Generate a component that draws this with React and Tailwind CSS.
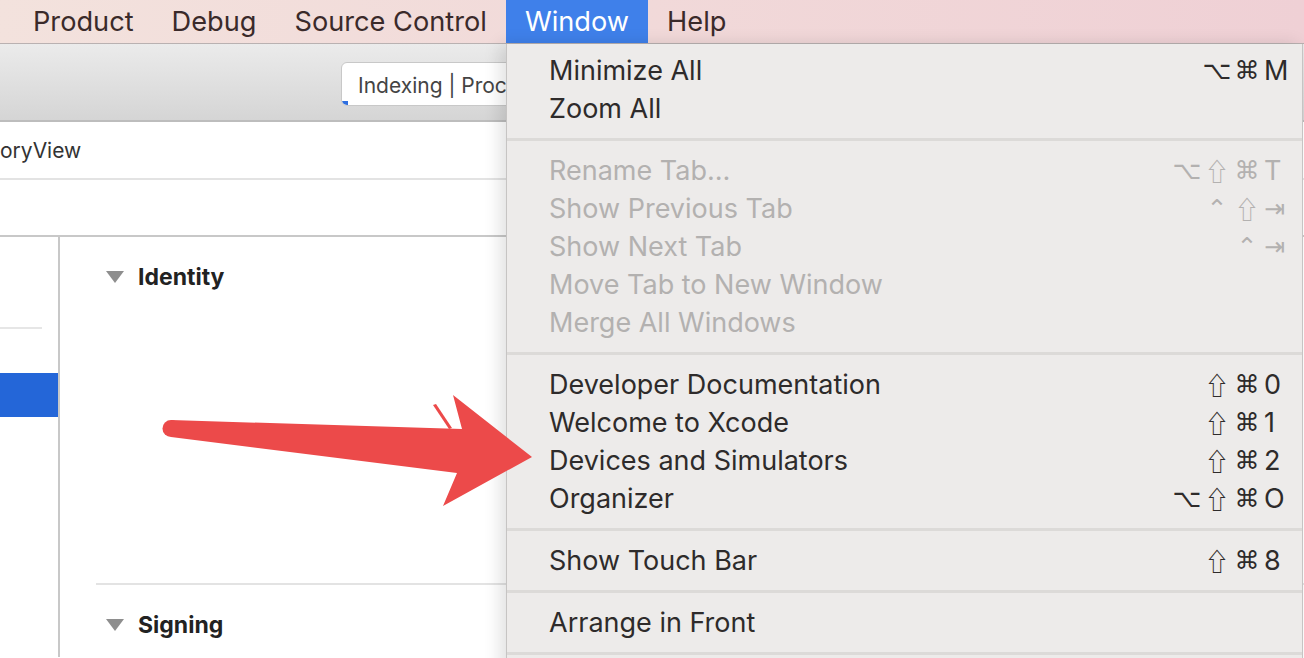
import React from 'react';

const topMenus = ['Product', 'Debug', 'Source Control', 'Window', 'Help'];

const groups = [
  [
    { label: 'Minimize All', mods: ['⌥', '⌘'], key: 'M' },
    { label: 'Zoom All' },
  ],
  [
    { label: 'Rename Tab…', mods: ['⌥', '⇧', '⌘'], key: 'T', off: true },
    { label: 'Show Previous Tab', mods: ['⌃', '⇧'], key: '⇥', off: true },
    { label: 'Show Next Tab', mods: ['⌃'], key: '⇥', off: true },
    { label: 'Move Tab to New Window', off: true },
    { label: 'Merge All Windows', off: true },
  ],
  [
    { label: 'Developer Documentation', mods: ['⇧', '⌘'], key: '0' },
    { label: 'Welcome to Xcode', mods: ['⇧', '⌘'], key: '1' },
    { label: 'Devices and Simulators', mods: ['⇧', '⌘'], key: '2' },
    { label: 'Organizer', mods: ['⌥', '⇧', '⌘'], key: 'O' },
  ],
  [{ label: 'Show Touch Bar', mods: ['⇧', '⌘'], key: '8' }],
  [{ label: 'Arrange in Front' }],
];

const Mod = ({ ch }) => (
  <span
    className={`w-[30px] flex justify-center text-[25px] leading-none ${
      ch === '⇧'
        ? "font-['Noto_Sans_CJK_JP','DejaVu_Sans',sans-serif]"
        : "font-['DejaVu_Sans',sans-serif]"
    }`}
  >
    {ch}
  </span>
);

const MenuItem = ({ item }) => (
  <div
    className={`h-[38px] flex items-center justify-between pl-[42px] pr-[12px] text-[27px] leading-none ${
      item.off ? 'text-[#b3b1b0]' : 'text-[#2e2b2b]'
    }`}
  >
    <span>{item.label}</span>
    {item.key && (
      <span className="flex items-center">
        {item.mods.map((m, i) => (
          <Mod key={i} ch={m} />
        ))}
        <span
          className={`w-[26px] ml-[2px] ${
            item.key === '⇥' ? "font-['DejaVu_Sans',sans-serif] text-[25px]" : ''
          }`}
        >
          {item.key}
        </span>
      </span>
    )}
  </div>
);

const Separator = () => (
  <div className="h-[24px] flex items-center">
    <div className="h-[3px] w-full bg-[#dcdad8]" />
  </div>
);

const Disclosure = ({ label }) => (
  <div className="flex items-center pt-[4px]">
    <svg width="18" height="12" viewBox="0 0 18 12" className="ml-[46px]">
      <polygon points="0,0 18,0 9,12" fill="#8e8e8e" />
    </svg>
    <span className="ml-[14px] text-[23px] font-bold text-[#222]">{label}</span>
  </div>
);

export default function App() {
  return (
    <div className="relative w-[1304px] h-[658px] overflow-hidden bg-white font-['Inter',sans-serif]">
      {/* menu bar */}
      <div className="h-[44px] flex items-stretch pl-[14px] bg-gradient-to-r from-[#f3e2dd] to-[#efd0d5] border-b border-[#b9b1b1]">
        {topMenus.map((m) => (
          <div
            key={m}
            className={`flex items-center px-[19px] text-[27.2px] leading-none ${
              m === 'Window' ? 'bg-[#3f80ea] text-white' : 'text-[#3a2a2a]'
            }`}
          >
            {m}
          </div>
        ))}
      </div>

      {/* toolbar */}
      <div className="h-[78px] bg-gradient-to-b from-[#ebebeb] to-[#d5d5d5] border-b-2 border-[#bdbdbd] flex items-center pl-[341px] pt-[3px]">
        <div className="relative h-[44px] w-[420px] bg-white border border-[#c8c8c8] rounded-[6px] flex items-center pl-[16px] pt-[4px] text-[21px] text-[#444] overflow-hidden">
          Indexing | Proc
          <div className="absolute left-0 bottom-0 w-[6px] h-[4px] bg-[#2f6fe0]" />
        </div>
      </div>

      {/* jump bar */}
      <div className="h-[58px] border-b-2 border-[#e3e3e3] flex items-center pt-[2px] text-[21px] text-[#333]">
        oryView
      </div>
      <div className="h-[57px] border-b-2 border-[#c8c8c8]" />

      {/* editor area */}
      <div className="flex h-[420px]">
        <div className="w-[60px] shrink-0 border-r-2 border-[#c8c8c8] flex flex-col">
          <div className="h-[90px] shrink-0" />
          <div className="h-[2px] w-[42px] shrink-0 bg-[#e6e6e6]" />
          <div className="h-[44px] shrink-0" />
          <div className="h-[44px] shrink-0 bg-[#2466d8]" />
        </div>
        <div className="flex-1">
          <div className="h-[76px] flex items-center">
            <Disclosure label="Identity" />
          </div>
          <div className="h-[270px]" />
          <div className="ml-[36px] h-[2px] bg-[#e3e3e3]" />
          <div className="h-[76px] flex items-center">
            <Disclosure label="Signing" />
          </div>
        </div>
      </div>

      {/* Window menu */}
      <div className="absolute left-[506px] top-[44px] w-[797px] bottom-[-20px] bg-[#edebea] border-l border-r border-[#c6c4c3] shadow-[-6px_0_16px_rgba(0,0,0,0.12)] pt-[7px]">
        {groups.map((g, gi) => (
          <div key={gi}>
            {g.map((item) => (
              <MenuItem key={item.label} item={item} />
            ))}
            <Separator />
          </div>
        ))}
      </div>

      {/* annotation arrow */}
      <svg className="absolute inset-0 pointer-events-none" width="1304" height="658" viewBox="0 0 1304 658">
        <circle cx="171" cy="428.5" r="8.5" fill="#ec4a4a" />
        <polygon
          points="171,420 462,429 453,395 532,457 443,506 457,473 171,437"
          fill="#ec4a4a"
        />
        <polygon points="433,405 436,404 452,428 449,429" fill="#ec4a4a" />
      </svg>
    </div>
  );
}
